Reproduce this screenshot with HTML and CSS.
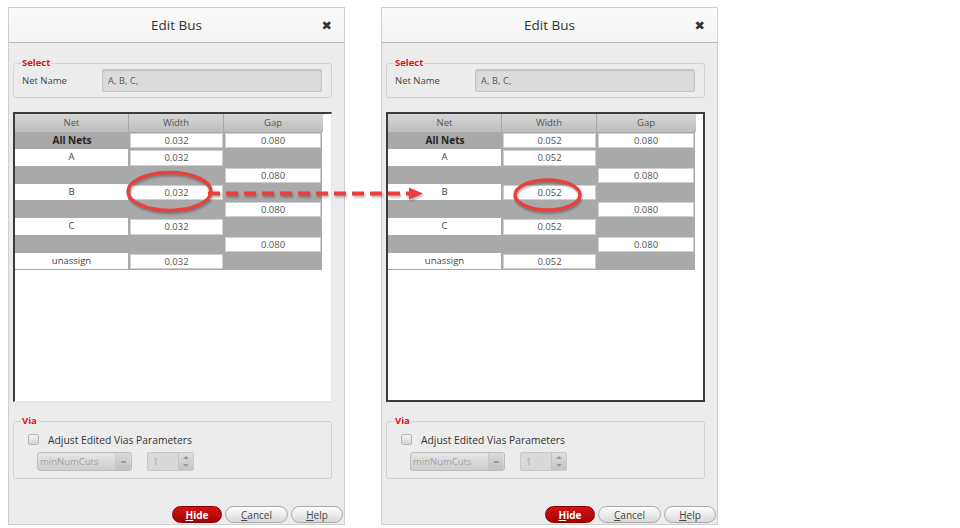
FILE: index.html
```html
<!DOCTYPE html>
<html>
<head>
<meta charset="utf-8">
<link rel="stylesheet" href="styles.css">
</head>
<body>
<div class="page">
  <div class="dialog">
    <div class="titlebar"><span></span><span class="title">Edit Bus</span><span class="close">✖</span></div>
    <div class="body">
      <fieldset class="group select">
        <legend>Select</legend>
        <div class="netrow"><span class="lbl">Net Name</span><div class="netfield">A, B, C,</div></div>
      </fieldset>
      <div class="frame">
        <div class="thead"><div>Net</div><div>Width</div><div>Gap</div></div>
        <div class="rows">
          <div class="c gray bold">All Nets</div><div class="c box">0.032</div><div class="c box">0.080</div>
          <div class="c white">A</div><div class="c box">0.032</div><div class="c gray"></div>
          <div class="c gray"></div><div class="c gray"></div><div class="c box">0.080</div>
          <div class="c white">B</div><div class="c box">0.032</div><div class="c gray"></div>
          <div class="c gray"></div><div class="c gray"></div><div class="c box">0.080</div>
          <div class="c white">C</div><div class="c box">0.032</div><div class="c gray"></div>
          <div class="c gray"></div><div class="c gray"></div><div class="c box">0.080</div>
          <div class="c white">unassign</div><div class="c box">0.032</div><div class="c gray"></div>
        </div>
      </div>
      <fieldset class="group via">
        <legend>Via</legend>
        <div class="chkrow"><span class="chk"></span><span>Adjust Edited Vias Parameters</span></div>
        <div class="ctlrow">
          <div class="combo"><span>minNumCuts</span><span class="drop"><i></i></span></div>
          <div class="spin"><span>1</span><span class="arrows"><i class="up"></i><i class="down"></i></span></div>
        </div>
      </fieldset>
      <div class="spacer"></div>
      <div class="buttons">
        <button class="btn hide"><u>H</u>ide</button>
        <button class="btn"><u>C</u>ancel</button>
        <button class="btn"><u>H</u>elp</button>
      </div>
    </div>
  </div>

  <div class="dialog right">
    <div class="titlebar"><span></span><span class="title">Edit Bus</span><span class="close">✖</span></div>
    <div class="body">
      <fieldset class="group select">
        <legend>Select</legend>
        <div class="netrow"><span class="lbl">Net Name</span><div class="netfield">A, B, C,</div></div>
      </fieldset>
      <div class="frame focused">
        <div class="thead"><div>Net</div><div>Width</div><div>Gap</div></div>
        <div class="rows">
          <div class="c gray bold">All Nets</div><div class="c box">0.052</div><div class="c box">0.080</div>
          <div class="c white">A</div><div class="c box">0.052</div><div class="c gray"></div>
          <div class="c gray"></div><div class="c gray"></div><div class="c box">0.080</div>
          <div class="c white">B</div><div class="c box">0.052</div><div class="c gray"></div>
          <div class="c gray"></div><div class="c gray"></div><div class="c box">0.080</div>
          <div class="c white">C</div><div class="c box">0.052</div><div class="c gray"></div>
          <div class="c gray"></div><div class="c gray"></div><div class="c box">0.080</div>
          <div class="c white">unassign</div><div class="c box">0.052</div><div class="c gray"></div>
        </div>
      </div>
      <fieldset class="group via">
        <legend>Via</legend>
        <div class="chkrow"><span class="chk"></span><span>Adjust Edited Vias Parameters</span></div>
        <div class="ctlrow">
          <div class="combo"><span>minNumCuts</span><span class="drop"><i></i></span></div>
          <div class="spin"><span>1</span><span class="arrows"><i class="up"></i><i class="down"></i></span></div>
        </div>
      </fieldset>
      <div class="spacer"></div>
      <div class="buttons">
        <button class="btn hide"><u>H</u>ide</button>
        <button class="btn"><u>C</u>ancel</button>
        <button class="btn"><u>H</u>elp</button>
      </div>
    </div>
  </div>
</div>

<svg class="overlay" width="960" height="528" viewBox="0 0 960 528">
  <ellipse cx="169.5" cy="191.5" rx="41.5" ry="19" fill="none" stroke="#e8403f" stroke-width="3.5"/>
  <line x1="208" y1="193.5" x2="410" y2="193.5" stroke="#e8403f" stroke-width="4" stroke-dasharray="12 6"/>
  <polygon points="409,187.5 423,193.5 409,199.5" fill="#e8403f"/>
  <ellipse cx="547.5" cy="195" rx="32.5" ry="15" fill="none" stroke="#e8403f" stroke-width="3.5"/>
</svg>
</body>
</html>
```

FILE: styles.css
```css
* { box-sizing: border-box; }
html, body { margin: 0; padding: 0; background: #fff; }
body {
  position: relative;
  width: 960px;
  height: 528px;
  overflow: hidden;
  font-family: "Open Sans", "DejaVu Sans", sans-serif;
  font-size: 9.5px;
  color: #333;
}
.page {
  display: flex;
  gap: 36px;
  padding: 7px 0 0 8px;
}
.dialog {
  width: 337px;
  height: 518px;
  border: 1px solid #cfcfcf;
  background: #ececec;
  display: flex;
  flex-direction: column;
}
.titlebar {
  height: 35px;
  flex: none;
  background: linear-gradient(#fbfbfb, #f3f3f3);
  border-bottom: 1px solid #b9b9b9;
  display: grid;
  grid-template-columns: 1fr auto 1fr;
  align-items: center;
}
.title {
  font-size: 13.5px;
  color: #333;
  padding-bottom: 1px;
}
.close {
  justify-self: end;
  margin-right: 12px;
  font-size: 12.5px;
  color: #333;
  font-family: "DejaVu Sans", sans-serif;
}
.body {
  flex: 1;
  display: flex;
  flex-direction: column;
  padding: 0 12px 1px 4px;
}
.group {
  margin: 0;
  border: 1px solid #d2d2d2;
  border-radius: 3px;
  min-width: 0;
}
.group legend {
  padding: 0 1px;
  color: #dd1111;
  font-weight: bold;
  font-size: 9.5px;
  line-height: 12px;
}
.select {
  margin-top: 14px;
  padding: 0 9px 5px 8px;
}
.select legend { margin-left: -1px; }
.netrow {
  display: flex;
  align-items: center;
}
.lbl {
  width: 80px;
  flex: none;
  color: #444;
}
.netfield {
  flex: 1;
  height: 23px;
  background: #dcdcdc;
  border: 1px solid #c6c6c6;
  border-radius: 2px;
  box-shadow: inset 0 1px 2px rgba(0,0,0,0.12);
  display: flex;
  align-items: center;
  padding-left: 5px;
  color: #555;
  font-size: 9px;
  letter-spacing: 0.2px;
}
.frame {
  margin-top: 14px;
  height: 290px;
  flex: none;
  background: #fff;
  border-left: 2px solid #3c3c3c;
  border-top: 2px solid #3c3c3c;
  border-right: 1px solid #e4e4e4;
  border-bottom: 1px solid #e4e4e4;
  padding-right: 8px;
}
.frame.focused {
  border: 2px solid #3c3c3c;
  padding-right: 7px;
}
.thead {
  display: grid;
  grid-template-columns: 114px 95px 98px;
  height: 18px;
  background: linear-gradient(#d6d6d6, #bdbdbd);
}
.thead div {
  text-align: center;
  line-height: 18px;
  color: #555;
  border-right: 1px solid #a8a8a8;
}
.thead div:last-child { border-right: none; }
.rows {
  display: grid;
  grid-template-columns: 114px 95px 98px;
  grid-auto-rows: 17.25px;
  background: #a9a9a9;
  width: 307px;
}
.c {
  text-align: center;
  line-height: 16px;
  color: #444;
}
.c.bold { font-weight: bold; color: #222; font-size: 10px; }
.c.white { background: #fff; margin: 0 1px 1px 0; }
.c.box {
  background: #fff;
  margin: 1px 1px 1px 1px;
  border: 1px solid #cfcfcf;
  line-height: 13px;
  color: #555;
}
.via {
  margin-top: 13px;
  padding: 7px 9px 7px 14px;
}
.via legend { margin-left: -7px; }
.chkrow {
  display: flex;
  align-items: center;
  gap: 9px;
  height: 11px;
  color: #333;
  font-size: 10.3px;
}
.chk {
  width: 11px;
  height: 11px;
  border: 1px solid #b5b5b5;
  border-radius: 2px;
  background: linear-gradient(#f4f4f4, #d4d4d4);
}
.ctlrow {
  display: flex;
  gap: 15px;
  margin-top: 7px;
  padding-left: 9px;
}
.combo {
  width: 95px;
  height: 19px;
  border: 1px solid #bdbdbd;
  border-radius: 3px;
  background: linear-gradient(#e6e6e6, #cdcdcd);
  display: flex;
  align-items: center;
  justify-content: space-between;
  padding-left: 2px;
  color: #a0a0a0;
}
.drop {
  width: 15px;
  height: 17px;
  margin-right: 1px;
  background: linear-gradient(#dadada, #c0c0c0);
  border-left: 1px solid #c9c9c9;
  display: flex;
  align-items: center;
  justify-content: center;
}
.drop i {
  width: 5px;
  height: 2px;
  background: #9a9a9a;
}
.spin {
  width: 47px;
  height: 19px;
  border: 1px solid #c9c9c9;
  border-radius: 2px;
  background: #d9d9d9;
  display: flex;
  justify-content: space-between;
  align-items: center;
  padding-left: 5px;
  color: #a3a3a3;
}
.arrows {
  width: 15px;
  height: 17px;
  display: flex;
  flex-direction: column;
  justify-content: space-around;
  align-items: center;
  background: linear-gradient(#dedede, #c4c4c4);
  border-left: 1px solid #c4c4c4;
}
.arrows i {
  width: 0;
  height: 0;
  border-left: 3px solid transparent;
  border-right: 3px solid transparent;
}
.arrows .up { border-bottom: 3px solid #9a9a9a; }
.arrows .down { border-top: 3px solid #9a9a9a; }
.spacer { flex: 1; }
.buttons {
  display: flex;
  justify-content: flex-end;
  gap: 3px;
  margin-right: -11px;
}
.btn {
  height: 17px;
  border-radius: 9px;
  border: 1px solid #a9a9a9;
  background: linear-gradient(#fdfdfd, #dadada);
  font-family: "Open Sans", "DejaVu Sans", sans-serif;
  font-size: 10px;
  color: #444;
  padding: 0;
  width: 63px;
  line-height: 14px;
}
.btn:last-child { width: 52px; }
.btn.hide {
  width: 50px;
  background: linear-gradient(#d41414, #a30000);
  border-color: #8a0000;
  color: #fff;
  font-weight: bold;
}
.overlay {
  position: absolute;
  left: 0;
  top: 0;
  pointer-events: none;
  filter: drop-shadow(1px 2px 1px rgba(0,0,0,0.3));
}
```
